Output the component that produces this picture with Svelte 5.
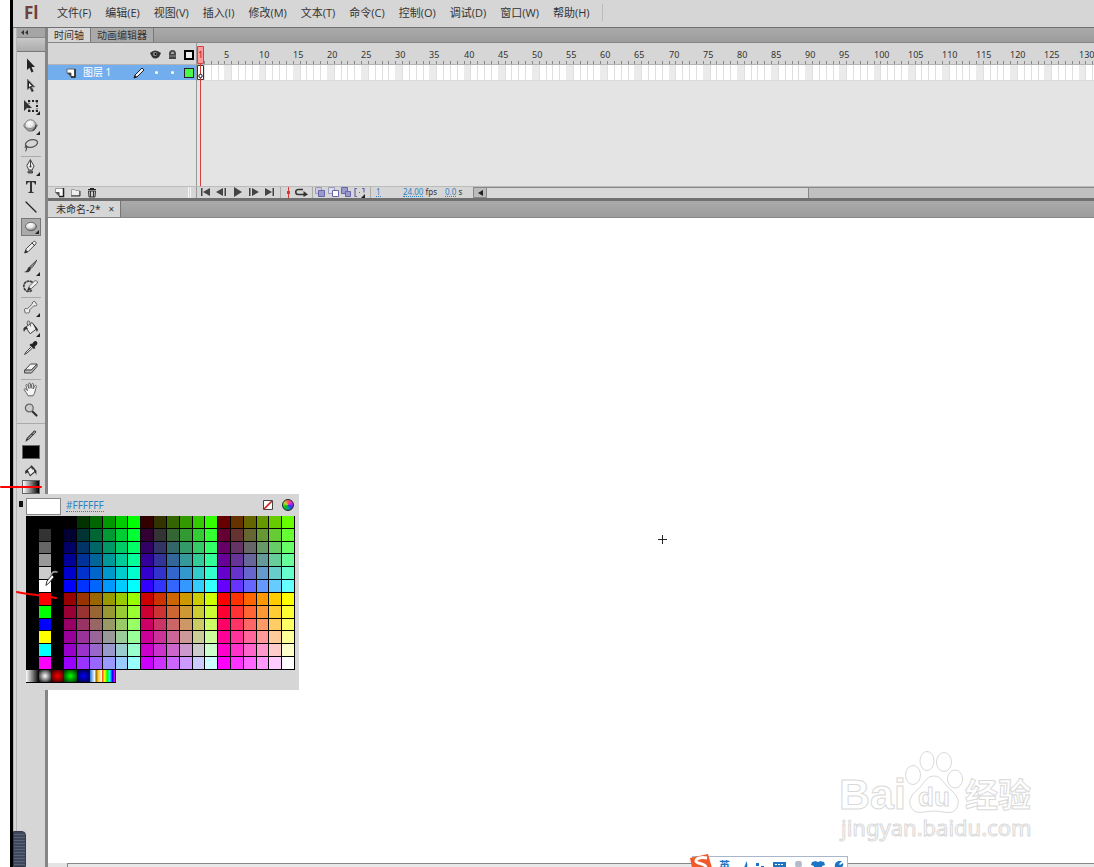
<script>
    const menus = ['文件(F)', '编辑(E)', '视图(V)', '插入(I)', '修改(M)', '文本(T)', '命令(C)', '控制(O)', '调试(D)', '窗口(W)', '帮助(H)'];

    // Tools, grouped the way the separators split them
    const toolGroups = [
        [
            { id: 'select', label: '选择工具' },
            { id: 'subselect', label: '部分选取工具' },
            { id: 'transform', label: '任意变形工具', more: true },
            { id: 'rotate', label: '3D 旋转工具', more: true },
            { id: 'lasso', label: '套索工具' }
        ],
        [
            { id: 'pen', label: '钢笔工具', more: true },
            { id: 'text', label: '文本工具' },
            { id: 'line', label: '线条工具' },
            { id: 'oval', label: '椭圆工具', more: true },
            { id: 'pencil', label: '铅笔工具' },
            { id: 'brush', label: '刷子工具', more: true },
            { id: 'deco', label: 'Deco 工具' }
        ],
        [
            { id: 'bone', label: '骨骼工具', more: true },
            { id: 'bucket', label: '颜料桶工具', more: true },
            { id: 'dropper', label: '滴管工具' },
            { id: 'eraser', label: '橡皮擦工具' }
        ],
        [
            { id: 'hand', label: '手形工具' },
            { id: 'zoom', label: '缩放工具' }
        ]
    ];
    let activeTool = $state('oval');

    // Timeline frames, as many as the panel has room for
    const frameWidth = 41 / 6;
    let framesWidth = $state(0);
    const frames = $derived(Array.from({ length: Math.floor(framesWidth / frameWidth) }, (_, i) => i + 1));
    const frameX = (n) => Math.round((n - 1) * frameWidth);

    // Web safe palette: black, greys and primaries, black, then the 6x6x6 cube
    const steps = ['00', '33', '66', '99', 'CC', 'FF'];
    const basics = ['#000000', '#333333', '#666666', '#999999', '#CCCCCC', '#FFFFFF', '#FF0000', '#00FF00', '#0000FF', '#FFFF00', '#00FFFF', '#FF00FF'];
    const swatches = [];
    for (let row = 0; row < 12; row++) {
        swatches.push('#000000', basics[row], '#000000');
        for (let col = 0; col < 18; col++) {
            const red = Math.floor(col / 6) + (row > 5 ? 3 : 0);
            swatches.push('#' + steps[red] + steps[col % 6] + steps[row % 6]);
        }
    }
    const gradients = ['gray', 'white', 'red', 'green', 'blue', 'sky', 'rainbow'];

    let color = $state('#FFFFFF');
</script>

{#snippet toolIcon(id)}
    <svg width="18" height="18" viewBox="0 0 18 18" fill="none" stroke="#333" stroke-linecap="round" stroke-linejoin="round">
        {#if id === 'select'}
            <path d="M5 1.500v11.500l2.500-2.300 2 4.800 2-.9-2-4.600h3.500z" fill="#222" stroke="none" />
        {:else if id === 'subselect'}
            <path d="M5.500 2.500v10l2.300-2 2 4.300 1.700-.8-2-4.200h3z" fill="#222" stroke="#555" stroke-width=".6" />
            <path d="M7 6v4l1.300-1 1.900 4-1.600-4h1.300z" fill="#fff" stroke="none" />
        {:else if id === 'transform'}
            <path d="M7 4h8v10H7z" stroke-dasharray="1.500 1.500" stroke-linecap="butt" />
            <path d="M2 3v11l3-3h5z" fill="#333" stroke="none" />
            <path d="M6 3h2v2H6zM10 3h2v2h-2zM14 3h2v2h-2zM6 13h2v2H6zM10 13h2v2h-2zM14 13h2v2h-2zM14 8h2v2h-2z" fill="#222" stroke="none" />
        {:else if id === 'rotate'}
            <ellipse cx="8.500" cy="8.500" rx="7" ry="3" fill="#ccc" stroke="#888" stroke-width=".8" />
            <circle cx="8.500" cy="8.500" r="5.700" fill="url(#ball)" stroke="#777" />
            <path d="M2 9.500c2 2.500 9 3 12 0" stroke="#777" stroke-width=".8" />
            <path d="M11 13.500c2-1 3-3 3-5" stroke="#444" stroke-width="1.200" />
        {:else if id === 'lasso'}
            <ellipse cx="9.500" cy="6.500" rx="6.200" ry="3.700" transform="rotate(-15 9.500 6.500)" stroke="#555" stroke-width="1.300" />
            <path d="M4.500 9c-3 .5-1.500 2.500.2 1.700s.8-1.700-.2-1.700c.5 2-.2 3.500-.7 5" stroke="#444" />
        {:else if id === 'pen'}
            <path d="M8.500 2l3.500 6-1.800 4H6.800L5 8z" fill="#eee" stroke="#444" />
            <path d="M8.500 2v6M6.500 13h4v2h-4z" fill="#666" stroke="#444" />
            <circle cx="8.500" cy="8.500" r="1" fill="#333" stroke="none" />
        {:else if id === 'text'}
            <path d="M4 3h10v3.500h-1c-.3-1.800-1-2.300-3-2.300V13c0 1 .5 1.200 1.800 1.300v.7H6.200v-.7C7.500 14.200 8 14 8 13V4.200c-2 0-2.700.5-3 2.300H4z" fill="#333" stroke="none" />
        {:else if id === 'line'}
            <path d="M4 4l10 10" stroke="#222" stroke-width="1.200" />
        {:else if id === 'oval'}
            <ellipse cx="9" cy="8.500" rx="5.500" ry="4.200" fill="url(#ball)" stroke="#555" stroke-width=".8" />
        {:else if id === 'pencil'}
            <path d="M3 14.500l1.200-3.700 7.500-7.300c1.200-.8 3 .9 2.200 2.300l-7.200 7.300z" fill="#f2f2f2" stroke="#444" />
            <path d="M3 14.500l.8-2.300 1.500 1.500zM10 5l2.500 2.500" fill="#222" stroke="#333" />
        {:else if id === 'brush'}
            <path d="M14.500 2.500L8 8.500l1.300 1.700c2.200-2 4-4.700 5.200-7.700z" fill="#999" stroke="#444" />
            <path d="M7.700 8.800c-2 .2-2 2.500-3 3.700-.8 1-1.500 1.200-2.700 1.500 3 1 6.500 0 7-3.500z" fill="#333" stroke="none" />
        {:else if id === 'deco'}
            <path d="M10 4C5 1.500 1 5 2 9.500s6 5 8 2.500" stroke="#444" stroke-width="1.800" stroke-dasharray="1.400 2" />
            <path d="M6 11.500l1.500-3.500 5-5c1-1 3.500 0 3 2l-5.500 5z" fill="#eee" stroke="#555" stroke-width=".9" />
            <path d="M6 12l1-2.500 1.500 1.500z" fill="#222" />
        {:else if id === 'bone'}
            <path d="M11 3c1-1.500 3-.5 2.500 1.200 1.800.2 2 2.500 0 2.800-.8 0-1.500-.3-1.700-.3L7.500 11c.8 1.800-.5 3.500-2 2.700C4 15 2 13.500 3 12c-1.500-1-.3-3 1.200-2.500.5 0 .8.300 1.300.2L10.300 5c-.2-.7 0-1.500.7-2z" fill="#eee" stroke="#555" stroke-width=".9" />
        {:else if id === 'bucket'}
            <path d="M4 8l6-4.500 5 6-6.500 5z" fill="#eee" stroke="#444" />
            <path d="M8.500 7C8 4 8 2 6.500 2S5 4 5.500 6" stroke="#555" />
            <path d="M4.500 7.500C1 8 1 10 2 13c1-2.500 2-3 4-3zM10 3.500l6 7-1 2.500-2-4z" fill="#333" stroke="none" />
        {:else if id === 'dropper'}
            <path d="M10 5c1.500-2 2-3 3.500-3S16 4 15 5.500c-1 1-1.500 1.500-2.500 2.500l1 1-1.500 1L7.500 6 9 4.500z" fill="#222" stroke="none" />
            <path d="M9 8l-5 5-1.500 2.500L5 14l5.500-5" fill="#eee" stroke="#444" />
        {:else if id === 'eraser'}
            <path d="M3 11l5.500-6h6.500l-5.500 6z" fill="#f3f3f3" stroke="#444" />
            <path d="M3 11h6.500l5.500-6v2.500L9.500 14H3z" fill="#bbb" stroke="#444" />
        {:else if id === 'hand'}
            <path d="M6 14.500c-1-2-2.500-4-3.700-5.500-.7-1.200.8-1.800 1.700-.8l1.500 1.600-1.600-5.200c-.2-1.300 1.300-1.600 1.700-.4L7 7.500l-.3-4.600c0-1.200 1.600-1.200 1.700 0L9 7.300l.9-4.200c.3-1.100 1.700-.8 1.600.4L11 8l1.900-3.200c.6-.9 1.800-.3 1.400.8-1 2.500-1 6-3 8.900z" fill="#f5f5f5" stroke="#555" stroke-width=".9" />
        {:else if id === 'zoom'}
            <path d="M10.500 10.500l4 4" stroke="#333" stroke-width="2.200" />
            <circle cx="7.300" cy="7" r="3.900" fill="#ccc" stroke="#666" stroke-width="1.300" />
        {/if}
    </svg>
{/snippet}

{#snippet smallIcon(id)}
    <svg width="13" height="11" viewBox="0 0 13 11" fill="none" stroke="#444">
        {#if id === 'newlayer'}
            <path d="M2.500 1.500h8v8h-4v-4h-4z" fill="#fff" stroke="#999" />
            <path d="M10.500 1v8.500H6" stroke="#222" stroke-width="1.500" /><path d="M2 5l4 4.500V5z" fill="#555" stroke="none" />
        {:else if id === 'folder'}
            <path d="M2.500 2.500h3l1 1h4v5h-8z" fill="#eee" stroke="#999" /><path d="M2 9h9V4" stroke="#333" />
        {:else if id === 'trash'}
            <path d="M3 2.500h8M5 1.500h4" stroke="#222" /><path d="M3.500 4h7L10 10H4z" fill="#ccc" stroke="#333" /><path d="M5.500 4v6M8.500 4v6" stroke="#333" />
        {:else if id === 'first'}
            <path d="M2 1h1.500v8H2zM4 5l7-4v8z" fill="#444" stroke="none" />
        {:else if id === 'prev'}
            <path d="M1 5l7-4v8zM9.500 1H11v8H9.500z" fill="#444" stroke="none" />
        {:else if id === 'play'}
            <path d="M3 0l8 5-8 5z" fill="#444" stroke="none" />
        {:else if id === 'next'}
            <path d="M2 1h1.500v8H2zM5 1l7 4-7 4z" fill="#444" stroke="none" />
        {:else if id === 'last'}
            <path d="M2 1l7 4-7 4zM9.500 1H11v8H9.500z" fill="#444" stroke="none" />
        {:else if id === 'center'}
            <path d="M6.500 0v11" stroke="#d33" /><path d="M5 4h3v3H5z" fill="#d33" stroke="none" />
        {:else if id === 'loop'}
            <path d="M8 2.500H3C0 2.500 0 7.500 3 7.500h6" stroke="#333" stroke-width="1.600" /><path d="M8.500 4l4.500 3.500L8.500 10z" fill="#333" stroke="none" />
        {:else if id === 'onion'}
            <path d="M1.500.5h6v6h-6z" fill="#ccd" stroke="#99b" /><path d="M4.500 3.500h6v6h-6z" fill="#99c" stroke="#66a" />
        {:else if id === 'outline'}
            <path d="M1.500.5h6v6h-6z" fill="#dde" stroke="#99b" /><path d="M5.500 3.500h6v6h-6z" fill="#fff" stroke="#66a" />
        {:else if id === 'multi'}
            <path d="M1.500.5h6v6h-6z" fill="#99c" stroke="#66a" /><path d="M5.500 4.500h5v5h-5z" fill="#99c" stroke="#66a" />
        {:else if id === 'markers'}
            <path d="M4 1.500H2v8h2M9 1.500h2v4M6 5.500h1" stroke="#66a" stroke-width="1.200" /><path d="M12 7v4H8z" fill="#222" stroke="none" />
        {/if}
    </svg>
{/snippet}

<div class="screen">
    <svg class="defs" width="0" height="0" aria-hidden="true">
        <defs>
            <radialGradient id="ball" cx=".4" cy=".3" r=".7">
                <stop offset="0" stop-color="#fff" />
                <stop offset=".5" stop-color="#e4e4e4" />
                <stop offset="1" stop-color="#777" />
            </radialGradient>
        </defs>
    </svg>

    <div class="app">
        <!-- Menu bar -->
        <header class="menubar">
            <span class="logo">Fl</span>
            <nav>
                {#each menus as menu}
                    <button>{menu}</button>
                {/each}
            </nav>
        </header>

        <div class="workspace">
            <!-- Tools -->
            <aside class="tools">
                <div class="tools-top"><button aria-label="折叠为图标">
                    <svg width="7" height="5" viewBox="0 0 7 5"><path d="M3 0v5L0 2.500zM7 0v5L4 2.500z" fill="#333" /></svg>
                </button></div>
                <div class="tools-grip"></div>
                {#each toolGroups as group}
                    <div class="tool-group">
                        {#each group as tool}
                            <button class="tool" class:active={activeTool === tool.id} class:more={tool.more} aria-label={tool.label} onclick={() => (activeTool = tool.id)}>
                                {@render toolIcon(tool.id)}
                            </button>
                        {/each}
                    </div>
                {/each}
                <div class="paints">
                    <svg width="14" height="14" viewBox="0 0 18 18"><path d="M3 15l1-3 8-8c1-2 3-2 3 0l-8 8zM10 6l2 2" fill="#eee" stroke="#333" stroke-width="1.300" /></svg>
                    <button class="paint stroke" aria-label="笔触颜色"></button>
                    <svg width="14" height="14" viewBox="0 0 18 18"><path d="M4 8l6-5 5 6-7 6zM9 2l2 5" fill="#eee" stroke="#333" stroke-width="1.300" /><path d="M4 7c-3 1-3 3-2 6l4-3zM11 3l5 6v5l-3-5z" fill="#333" /></svg>
                    <button class="paint fill" aria-label="填充颜色"></button>
                    <button class="swap" aria-label="黑白"></button>
                </div>
            </aside>

            <main>
                <!-- Timeline -->
                <section class="timeline">
                    <div class="tabs">
                        <button class="tab active">时间轴</button>
                        <button class="tab">动画编辑器</button>
                    </div>
                    <div class="timeline-body">
                        <div class="layers">
                            <div class="layer-head">
                                <svg width="11" height="9" viewBox="0 0 11 9"><path d="M0 3Q5-2 11 3L9 7Q5 10 2 7z" fill="#333" /><circle cx="5" cy="4" r="2" fill="#999" /><circle cx="5.500" cy="4" r="1" fill="#000" /></svg>
                                <svg width="9" height="10" viewBox="0 0 9 10"><path d="M1 9V4Q1 0 4.500 0T8 4v5z" fill="#444" /><path d="M3 4q0-2.500 1.500-2.500T6 4z" fill="#aaa" /><path d="M1 6h7" stroke="#888" /></svg>
                                <svg width="10" height="10" viewBox="0 0 10 10"><path d="M1 1h8v8H1z" fill="#eee" stroke="#000" stroke-width="2" /></svg>
                            </div>
                            <div class="layer">
                                <svg width="10" height="10" viewBox="0 0 10 10"><path d="M1 1h8v8H5V5H1z" fill="#fff" stroke="#666" /><path d="M9 1v8H5" stroke="#222" stroke-width="1.500" fill="none" /><path d="M1 5l4 4V5z" fill="#444" /></svg>
                                <span class="layer-name">图层 1</span>
                                <svg width="12" height="12" viewBox="0 0 12 12"><path d="M1 11l1-3 7-7 2 2-7 7z" fill="#eee" stroke="#222" /><path d="M1 11l1-3 2 2z" fill="#222" /></svg>
                                <span class="dot"></span>
                                <span class="dot"></span>
                                <button class="layer-color" aria-label="图层颜色"></button>
                            </div>
                        </div>
                        <div class="frames" bind:clientWidth={framesWidth}>
                            <svg width="100%" height="143">
                                <rect width="100%" height="21" fill="#d6d6d6" />
                                <rect y="21" width="100%" height="1" fill="#b4b4b4" />
                                <rect y="22" width="100%" height="15" fill="#fff" />
                                {#each frames as n}
                                    {#if n % 5 === 0}
                                        <rect x={frameX(n)} y="22" width="7" height="15" fill="#ebebeb" />
                                        <text x={frameX(n)} y="15">{n}</text>
                                    {/if}
                                    <rect x={frameX(n + 1)} y="22" width="1" height="15" fill="#dfdfdf" />
                                    <rect x={frameX(n + 1)} y="18" width="1" height="3" fill="#888" />
                                {/each}
                                <rect y="37" width="100%" height="1" fill="#dadada" />
                                <path d="M.5 22.500h6v14h-6z" fill="#fff" stroke="#333" />
                                <path d="M.5 3.500h6v17h-6z" fill="#f99" stroke="#d24040" />
                                <text x="1" y="15" class="current">1</text>
                                <path d="M3.500 21v122" stroke="#d24040" />
                                <circle cx="3.500" cy="33" r="1.700" fill="#fff" stroke="#111" />
                            </svg>
                        </div>
                    </div>
                    <div class="timeline-foot">
                        <div class="layer-actions">
                            <button aria-label="新建图层">{@render smallIcon('newlayer')}</button>
                            <button aria-label="新建文件夹">{@render smallIcon('folder')}</button>
                            <button aria-label="删除">{@render smallIcon('trash')}</button>
                            <span class="grip"></span>
                        </div>
                        <div class="playback">
                            <button aria-label="转到第一帧">{@render smallIcon('first')}</button>
                            <button aria-label="后退一帧">{@render smallIcon('prev')}</button>
                            <button aria-label="播放">{@render smallIcon('play')}</button>
                            <button aria-label="前进一帧">{@render smallIcon('next')}</button>
                            <button aria-label="转到最后一帧">{@render smallIcon('last')}</button>
                        </div>
                        <div class="onion">
                            <button aria-label="帧居中">{@render smallIcon('center')}</button>
                            <button aria-label="循环">{@render smallIcon('loop')}</button>
                        </div>
                        <div class="onion">
                            <button aria-label="绘图纸外观">{@render smallIcon('onion')}</button>
                            <button aria-label="绘图纸外观轮廓">{@render smallIcon('outline')}</button>
                            <button aria-label="编辑多个帧">{@render smallIcon('multi')}</button>
                            <button aria-label="修改标记">{@render smallIcon('markers')}</button>
                        </div>
                        <div class="status">
                            <span class="frame-no"><a href="#frame">1</a></span>
                            <span class="fps"><a href="#fps">24.00</a> fps</span>
                            <span class="time"><a href="#time">0.0</a> s</span>
                        </div>
                        <button class="scroll-left" aria-label="向左滚动">
                            <svg width="5" height="6" viewBox="0 0 5 6"><path d="M5 0v6L0 3z" fill="#222" /></svg>
                        </button>
                        <div class="scroll"><div class="thumb"></div></div>
                    </div>
                </section>

                <!-- Document -->
                <div class="tabs doc-tabs">
                    <div class="tab active">未命名-2*<button aria-label="关闭">×</button></div>
                </div>
                <section class="stage">
                    <svg class="crosshair" width="9" height="9" viewBox="0 0 9 9"><path d="M4.500 0v9M0 4.500h9" stroke="#222" /></svg>
                    <svg class="watermark" width="200" height="100" viewBox="0 0 200 100" fill="#fff" stroke="#d9d9d9" stroke-width="1">
                        <text x="3" y="60" class="brand">Bai</text>
                        <ellipse cx="77" cy="26" rx="7.500" ry="9.500" />
                        <ellipse cx="91" cy="12" rx="7" ry="9.500" />
                        <ellipse cx="108" cy="13" rx="7.500" ry="9.500" />
                        <ellipse cx="119" cy="30" rx="7.500" ry="9" />
                        <path d="M98 27c-9 0-10 9-17 14-6 5-9 11-6 17 4 9 14 4 23 4s18 5 23-3c3-7 0-13-6-18-7-5-9-14-17-14z" />
                        <text x="82" y="57" class="du">du</text>
                        <text x="129" y="58" class="cn">经验</text>
                        <text x="5" y="87" class="url">jingyan.baidu.com</text>
                    </svg>
                </section>
                <div class="stage-scroll"><div></div></div>
            </main>
        </div>
    </div>

    <!-- Colour picker -->
    <div class="picker">
        <div class="picker-head">
            <span class="preview" style="background: {color}"></span>
            <a href="#hex">{color}</a>
            <button class="none" aria-label="无颜色">
                <svg width="10" height="10" viewBox="0 0 10 10"><path d="M.5.5h9v9h-9z" fill="#fff" stroke="#444" /><path d="M1 9l8-8" stroke="#c22" stroke-width="1.700" /></svg>
            </button>
            <button class="wheel" aria-label="系统颜色"></button>
        </div>
        <div class="palette">
            {#each swatches as swatch}
                <button style="background: {swatch}" aria-label={swatch} onclick={() => (color = swatch)}></button>
            {/each}
        </div>
        <div class="gradients">
            {#each gradients as gradient}
                <button class={gradient} aria-label={gradient}></button>
            {/each}
        </div>
    </div>

    <svg class="marks" width="60" height="130" viewBox="0 0 60 130" fill="none" stroke="#f00" stroke-width="2" stroke-linecap="round">
        <path d="M1 17h40M17 122c12 3 26 3 39 6" />
        <g stroke-width="1">
            <path d="M46 115l1-4 5-6 2 2-5 6z" fill="#fff" stroke="#333" />
            <path d="M51 105c1-3 3-4 6-3" stroke="#999" stroke-width="1.500" />
        </g>
    </svg>

    <div class="side-handle"></div>

    <!-- Input method bar -->
    <div class="ime">
        <svg width="22" height="14" viewBox="0 0 22 14"><path d="M0 4l18-4 4 14H2z" fill="#f2592a" /><path d="M17 4C11 3 6 4 6 7s9 2 10 6" fill="none" stroke="#fff" stroke-width="3" /></svg>
        <span>英</span>
        <svg width="120" height="9" viewBox="0 0 120 9" fill="#1c74c4">
            <path d="M10 0c2 3 2 6-1 9H5c3-2 5-5 5-9zM20 2h3v3h-3zM25 5h3v3h-3z" />
            <path d="M37 1h13v8H37z" /><path d="M39 3.500h9M39 6.500h9" stroke="#fff" stroke-dasharray="2 1" />
            <path d="M59 3a3 3 0 0 1 7 0q0 3-2 4l4 2H57l4-2q-2-1-2-4z" fill="#b4bccb" />
            <path d="M76 1l4-1q2 2 4 0l4 1 1 3-3 1v4h-8V5l-3-1z" />
            <path d="M106 0c-5-1-8 2-7 6l-3 3h5l2-2c3 0 5-2 4-5l-3 2-1-1z" />
        </svg>
    </div>
</div>

<style>
:global(body) {
    background: #fff;
}

.screen {
    position: relative;
    display: flex;
    height: 100vh;
    padding-left: 10px;
    overflow: hidden;
    box-sizing: border-box;
    font-family: "Noto Sans", "Noto Sans CJK SC", sans-serif;
    font-size: 11px;
    color: #333;
}

.screen :global(*) {
    box-sizing: border-box;
}

.defs {
    position: absolute;
}

svg {
    display: block;
    flex-shrink: 0;
}

button {
    display: flex;
    align-items: center;
    justify-content: center;
    padding: 0;
    border: 0;
    background: none;
    font: inherit;
    color: inherit;
}

a {
    color: #2d83c2;
    text-decoration: none;
    border-bottom: 1px dotted #2d83c2;
}

.app {
    flex: 1;
    min-width: 0;
    display: flex;
    flex-direction: column;
    border-left: 3px solid #000;
    background: #d6d6d6;
}

/* Menu bar */
.menubar {
    display: flex;
    align-items: center;
    height: 28px;
    padding: 0 0 2px 11px;
    border-bottom: 1px solid #707070;
}

.logo {
    width: 33px;
    font: bold 17px/24px "Open Sans", sans-serif;
    color: #70403e;
}

nav {
    display: flex;
    gap: 14px;
    padding-right: 12px;
    border-right: 1px solid #bbb;
    font-family: "Open Sans", "Noto Sans CJK SC", sans-serif;
    line-height: 17px;
}

nav button {
    white-space: nowrap;
}

.workspace {
    flex: 1;
    display: flex;
    min-height: 0;
}

/* Tools */
.tools {
    width: 35px;
    border-left: 4px double #b5b5b5;
    border-right: 3px solid #858585;
}

.tools-top {
    display: flex;
    align-items: center;
    height: 9px;
    padding-left: 4px;
    background: #a5a5a5;
}

.tools-grip {
    height: 15px;
    margin-bottom: 4px;
    border-top: 1px solid #888;
    border-bottom: 1px solid #777;
    background: linear-gradient(#c8c8c8, #acacac);
}

.tool-group {
    padding: 0 4px;
}

.tool-group + .tool-group::before,
.paints::before {
    content: "";
    display: block;
    height: 1px;
    background: #aaa;
}

.tool-group:nth-last-child(2) {
    padding-top: 1px;
}

.tool {
    position: relative;
    width: 20px;
    height: 20px;
}

.tool.active {
    height: 18px;
    margin: 1px 0;
    border: 1px solid #777;
    background: #aaa;
}

.tool.more::after {
    content: "";
    position: absolute;
    right: 1px;
    bottom: 1px;
    border: 2px solid #222;
    border-top-color: transparent;
    border-left-color: transparent;
}

.paints {
    display: flex;
    flex-direction: column;
    align-items: center;
    margin-top: 3px;
}

.paints::before {
    align-self: stretch;
}

.paints svg {
    margin: 5px 0 2px;
}

.paint {
    width: 18px;
    height: 14px;
    border: 1px solid #666;
}

.paint.stroke {
    background: #000;
}

.paint.fill {
    background: linear-gradient(90deg, #fff, #000);
}

.swap {
    align-self: flex-start;
    width: 4px;
    height: 6px;
    margin: 7px 2px;
    background: #111;
}

/* Panels */
main {
    flex: 1;
    display: flex;
    flex-direction: column;
    min-width: 0;
}

.tabs {
    display: flex;
    height: 15px;
    border-bottom: 1px solid #858585;
    background: linear-gradient(#aaa, #9c9c9c);
}

.tab {
    display: flex;
    align-items: center;
    padding: 0 6px;
    border-right: 1px solid #777;
    background: #aaa;
    font-size: 10px;
    line-height: 14px;
    white-space: nowrap;
}

.tab.active {
    background: #d6d6d6;
}

.timeline {
    border-bottom: 3px solid #707070;
}

.timeline-body {
    display: flex;
    height: 143px;
    background: #e4e4e4;
}

.layers {
    width: 149px;
    border-right: 1px solid #999;
}

.layer-head {
    display: flex;
    align-items: center;
    justify-content: flex-end;
    gap: 7px;
    height: 22px;
    padding: 2px 2px 0 0;
    background: #d6d6d6;
    border-bottom: 1px solid #b4b4b4;
}

.layer {
    display: flex;
    align-items: center;
    gap: 7px;
    height: 15px;
    padding: 0 2px 0 18px;
    background: #72aeee;
    color: #fff;
    font-size: 10px;
    line-height: 15px;
}

.layer-name {
    flex: 1;
}

.dot {
    width: 3px;
    height: 3px;
    margin: 0 3px;
    border-radius: 50%;
    background: #fff;
}

.layer-color {
    width: 10px;
    height: 10px;
    border: 1px solid #222;
    background: #4cf64c;
}

.frames {
    flex: 1;
    min-width: 0;
}

.frames text {
    font-size: 9px;
    fill: #333;
}

.frames .current {
    fill: #922;
}

.timeline-foot {
    display: flex;
    align-items: stretch;
    height: 12px;
    border-top: 1px solid #bbb;
    font-size: 8px;
    line-height: 10px;
}

.layer-actions {
    display: flex;
    gap: 3px;
    width: 149px;
    padding: 0 5px;
    border-right: 1px solid #999;
}

.grip {
    width: 3px;
    margin-left: auto;
    border: solid #f4f4f4;
    border-width: 0 1px;
}

.playback {
    display: flex;
    gap: 3px;
    padding: 0 4px 0 2px;
    border-right: 1px solid #aaa;
}

.onion {
    display: flex;
    padding: 0 4px 0 1px;
    border-right: 1px solid #aaa;
}

.status {
    display: flex;
    width: 102px;
    padding-left: 5px;
}

.status a {
    display: inline-block;
    height: 10px;
}

.frame-no {
    width: 27px;
}

.fps {
    width: 42px;
}

.status span {
    white-space: nowrap;
}

.scroll-left {
    width: 14px;
    border: 1px solid #888;
    background: #bbb;
}

.scroll {
    flex: 1;
    border-top: 1px solid #888;
    background: #c0c0c0;
}

.thumb {
    width: 53%;
    height: 100%;
    border-right: 1px solid #888;
    background: #d8d8d8;
}

/* Document */
.doc-tabs {
    height: 17px;
}

.doc-tabs .tab {
    padding-left: 8px;
    gap: 8px;
}

.stage {
    position: relative;
    flex: 1;
    background: #fff;
}

.crosshair {
    position: absolute;
    left: 610px;
    top: 317px;
}

.watermark {
    position: absolute;
    right: 58px;
    bottom: 14px;
}

.brand {
    font: bold 43px "Liberation Sans", sans-serif;
}

.du {
    font: bold 26px "Liberation Sans", sans-serif;
}

.cn {
    font: bold 33px "Noto Sans CJK SC", sans-serif;
}

.url {
    font: 22px "Noto Sans", sans-serif;
}

.stage-scroll {
    height: 4px;
    padding-left: 19px;
    background: #e4e4e4;
}

.stage-scroll div {
    height: 4px;
    border: solid #888;
    border-width: 1px 0 0 1px;
    background: #e8e8e8;
}

/* Colour picker */
.picker {
    position: absolute;
    left: 26px;
    top: 494px;
    width: 273px;
    height: 196px;
    background: #d6d6d6;
}

.picker-head {
    display: flex;
    align-items: center;
    height: 22px;
    padding-right: 5px;
    font-size: 10px;
    line-height: 12px;
}

.preview {
    width: 35px;
    height: 17px;
    margin: 2px 5px 0 0;
    border: 1px solid #888;
}

.none {
    margin-left: auto;
}

.wheel {
    width: 12px;
    height: 12px;
    margin-left: 9px;
    border: 1px solid #222;
    border-radius: 50%;
    background: conic-gradient(#f55, #d2d, #33f, #099, #0c0, #bd3, #f55);
}

.palette {
    display: grid;
    grid-template-columns: repeat(21, 1fr);
    grid-template-rows: repeat(12, 1fr);
    gap: 1px;
    width: 269px;
    height: 154px;
    padding: 0 1px 1px 0;
    background: #000;
}

.gradients {
    display: flex;
    width: 90px;
    height: 13px;
    border-right: 1px solid #000;
    border-bottom: 1px solid #000;
}

.gradients button {
    flex: 1;
}

.gray {
    background: linear-gradient(90deg, #fff, #000);
}

.white {
    background: radial-gradient(#fff, #000);
}

.red {
    background: radial-gradient(#f00, #200);
}

.green {
    background: radial-gradient(#0f0, #020);
}

.blue {
    background: radial-gradient(#00f, #002);
}

.sky {
    background: linear-gradient(90deg, #27d, #fff 40%, #960 50%, #fc3 70%, #fff);
}

.rainbow {
    background: linear-gradient(90deg, #f33, #ff0, #0f0, #0ff, #00f, #f0f);
}

/* Overlays */
.marks {
    position: absolute;
    left: 0;
    top: 470px;
    pointer-events: none;
}

.side-handle {
    position: absolute;
    left: 13px;
    bottom: 0;
    width: 13px;
    height: 36px;
    border: 1px solid #333a4a;
    border-radius: 0 4px 0 0;
    background: repeating-linear-gradient(#3d465a 0 2px, #596378 2px 3px);
}

.ime {
    position: absolute;
    left: 692px;
    bottom: 0;
    display: flex;
    align-items: flex-start;
    width: 156px;
    height: 11px;
    border: 1px solid #aab6ca;
    border-bottom: 0;
    background: #fff;
    color: #1c74c4;
    font-weight: bold;
}

.ime span {
    margin: 2px 0 0 7px;
    line-height: 14px;
}

.ime svg:first-child {
    margin: -3px 0 0 -3px;
}

.ime svg:last-child {
    margin: 4px 0 0 6px;
}
</style>
